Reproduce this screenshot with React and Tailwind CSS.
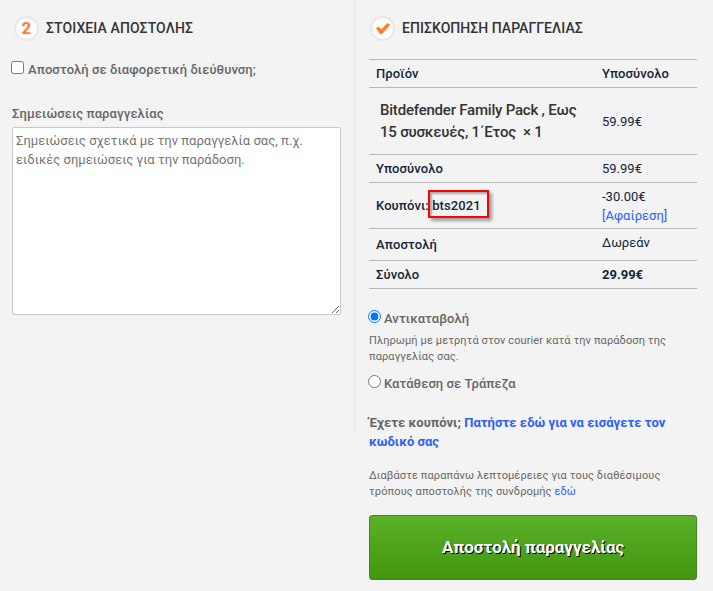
import React, { useState } from "react";

const StepBadge = ({ children }) => (
  <span className="flex h-[25px] w-[25px] shrink-0 items-center justify-center rounded-full border-2 border-[#e8e8e8] bg-[#fcfcfc] text-[17px] leading-none font-bold text-[#ff7f32]">
    {children}
  </span>
);

const Row = ({ label, className, children }) => (
  <div className={`flex items-center border-b border-[#b9b9b5] ${className}`}>
    <div className="w-[233px] shrink-0 pl-[7px] font-medium tracking-[0.1px]">{label}</div>
    <div>{children}</div>
  </div>
);

const App = () => {
  const [payment, setPayment] = useState("cod");

  return (
    <div className="flex h-[591px] w-[713px] overflow-hidden bg-[#f3f3f3] font-[Roboto,sans-serif] text-[13px] text-[#666]">
      {/* Shipping details */}
      <section className="flex h-full w-[354px] flex-col pt-4 pl-3">
        <div className="flex h-[25px] items-center gap-2 pl-0.5">
          <StepBadge>2</StepBadge>
          <h2 className="-ml-px text-[14px] font-medium tracking-[0.1px] text-[#333]">ΣΤΟΙΧΕΙΑ ΑΠΟΣΤΟΛΗΣ</h2>
        </div>

        <label className="mt-[19px] flex h-5 items-start gap-1 font-medium tracking-[0.08px]">
          <input type="checkbox" className="mt-px -ml-px h-[13px] w-[13px]" />
          <span className="leading-5">Αποστολή σε διαφορετική διεύθυνση;</span>
        </label>

        <label className="mt-6 h-[23px] leading-5 font-medium tracking-[0.1px]" htmlFor="notes">
          Σημειώσεις παραγγελίας
        </label>
        <textarea
          id="notes"
          className="h-[188px] w-[329px] resize rounded-xs border border-[#c8c8c8] bg-white px-[3px] py-[3px] leading-[19px] tracking-[0.03px] placeholder:text-[#757575]"
          placeholder="Σημειώσεις σχετικά με την παραγγελία σας, π.χ. ειδικές σημειώσεις για την παράδοση."
        />
      </section>

      <div className="h-[434px] border-l border-dotted border-[#dedfd5]" />

      {/* Order review */}
      <section className="flex h-full w-[342px] flex-col pt-4 pl-3.5">
        <div className="flex h-[25px] items-center gap-2 pl-px">
          <StepBadge>
            <svg width="16" height="14" viewBox="0 0 16 14" className="shrink-0">
              <path d="M1 6.5 L3.5 4.5 L6.3 7.2 L12.5 1 L15.2 2.7 L7 12.3 L5 12.3 Z" fill="#ff7f32" />
            </svg>
          </StepBadge>
          <h2 className="-ml-px text-[14px] font-medium tracking-[0.05px] text-[#333]">ΕΠΙΣΚΟΠΗΣΗ ΠΑΡΑΓΓΕΛΙΑΣ</h2>
        </div>

        <div className="mt-[18px] border-t border-[#b9b9b5] leading-[19px] text-[#15243b]">
          <Row label="Προϊόν" className="h-7 font-medium">
            <span className="tracking-[0.1px]">Υποσύνολο</span>
          </Row>
          <div className="flex h-[67px] items-center border-b border-[#b9b9b5]">
            <div className="w-[233px] shrink-0 pr-4 pl-[11px] text-[15px] leading-[22px] font-medium tracking-[-0.21px] text-[#333]">
              Bitdefender Family Pack , Εως 15 συσκευές, 1΄Ετος &nbsp;× 1
            </div>
            <div>59.99€</div>
          </div>
          <Row label="Υποσύνολο" className="h-7">59.99€</Row>
          <Row
            className="h-[46px]"
            label={
              <span className="relative">
                Κουπόνι: bts2021
                <span className="absolute -top-[8px] left-[52px] h-7 w-[61px] border-2 border-[#f00] shadow-[3px_3px_3px_rgba(0,0,0,0.35),inset_2px_2px_2px_rgba(0,0,0,0.3)]" />
              </span>
            }
          >
            <div>-30.00€</div>
            <a href="#" className="text-[#2b60ff]">[Αφαίρεση]</a>
          </Row>
          <Row label="Αποστολή" className="h-8">
            <div className="pb-1">Δωρεάν</div>
          </Row>
          <Row label="Σύνολο" className="h-7">
            <strong className="font-bold">29.99€</strong>
          </Row>
        </div>

        <label className="mt-5 flex h-5 items-start gap-[3px] font-medium">
          <input
            type="radio"
            name="payment"
            className="mt-px -ml-px h-[13px] w-[13px]"
            checked={payment === "cod"}
            onChange={() => setPayment("cod")}
          />
          <span className="leading-5 tracking-[0.06px]">Αντικαταβολή</span>
        </label>
        <p className="mt-1 text-[11px] leading-4 tracking-[0.11px]">
          Πληρωμή με μετρητά στον courier κατά την παράδοση της παραγγελίας σας.
        </p>
        <label className="mt-[9px] flex h-5 items-start gap-[3px] font-medium">
          <input
            type="radio"
            name="payment"
            className="mt-px -ml-px h-[13px] w-[13px]"
            checked={payment === "bank"}
            onChange={() => setPayment("bank")}
          />
          <span className="leading-5 tracking-[0.06px]">Κατάθεση σε Τράπεζα</span>
        </label>

        <p className="mt-[19px] leading-[19px] font-bold tracking-[0.03px]">
          Έχετε κουπόνι;{" "}
          <a href="#" className="text-[#2b60ff]">Πατήστε εδώ για να εισάγετε τον κωδικό σας</a>
        </p>

        <p className="mt-[17px] text-[11px] leading-4 tracking-[0.11px]">
          Διαβάστε παραπάνω λεπτομέρειες για τους διαθέσιμους τρόπους αποστολής της συνδρομής{" "}
          <a href="#" className="text-[#2b60ff]">εδώ</a>
        </p>

        <button className="mt-[15px] h-[65px] w-full shrink-0 rounded-[3px] border border-[#45851f] bg-linear-to-b from-[#5bb128] to-[#42960f] text-[17px] font-bold tracking-[-0.05px] text-white [text-shadow:1px_1px_0_#000]">
          Αποστολή παραγγελίας
        </button>
      </section>
    </div>
  );
};

export default App;
